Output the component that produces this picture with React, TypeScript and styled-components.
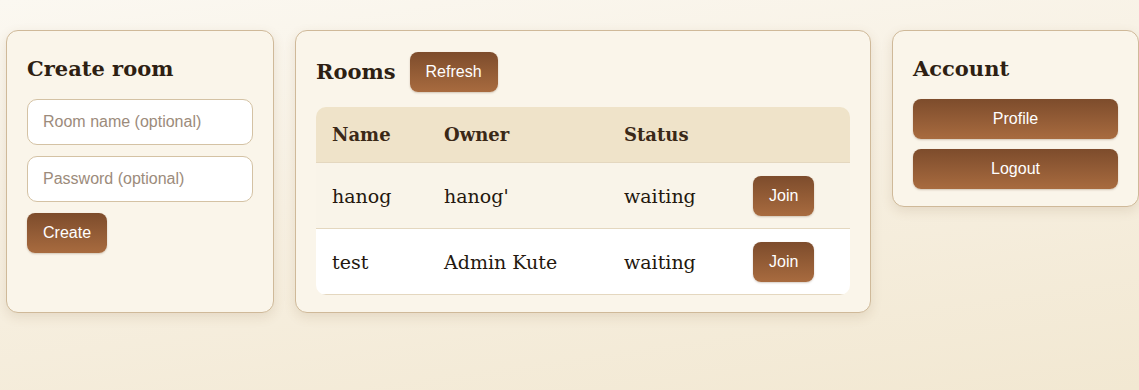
import React from 'react'
import styled, { createGlobalStyle } from 'styled-components'

type Room = {
  id: number
  name: string
  owner: string
  status: string
}

const rooms: Room[] = [
  { id: 1, name: 'hanog', owner: "hanog'", status: 'waiting' },
  { id: 2, name: 'test', owner: 'Admin Kute', status: 'waiting' },
]

const GlobalStyle = createGlobalStyle`
  html, body {
    margin: 0;
    padding: 0;
    min-height: 100vh;
    overflow: hidden;
  }
  body {
    background: linear-gradient(172deg, #fbf8f1 0%, #f7f0e2 45%, #f2e8d2 100%);
    font-family: 'DejaVu Serif', serif;
    color: #2b1d12;
  }
`

const Page = styled.div`
  display: grid;
  grid-template-columns: 268px 576px 247px;
  column-gap: 21px;
  align-items: stretch;
  align-content: start;
  padding: 30px 0 0 6px;
  min-height: 390px;
  box-sizing: border-box;
`

const Card = styled.section<{ $shrink?: boolean }>`
  align-self: ${p => (p.$shrink ? 'start' : 'stretch')};
  background: #faf5ea;
  border: 1px solid #cfb999;
  border-radius: 12px;
  box-shadow: 0 4px 12px rgba(125, 92, 50, 0.14);
  padding: 20px 20px 17px;
  box-sizing: border-box;
`

const Title = styled.h2`
  margin: 0 0 12px;
  font-size: 21px;
  line-height: 36px;
  font-weight: 700;
  color: #2e1f13;
`

const Stack = styled.div`
  display: flex;
  flex-direction: column;
  align-items: flex-start;
  gap: 11px;
`

const Field = styled.input`
  width: 226px;
  height: 46px;
  box-sizing: border-box;
  padding: 0 15px;
  border: 1px solid #d4c2a4;
  border-radius: 10px;
  background: #fff;
  font-family: 'Liberation Sans', Arial, sans-serif;
  font-size: 16px;
  color: #2b1d12;
  outline: none;
  &::placeholder {
    color: #9c8b7b;
  }
`

const Button = styled.button<{ $wide?: boolean }>`
  height: 40px;
  width: ${p => (p.$wide ? '100%' : 'auto')};
  padding: 0 16px;
  border: none;
  border-radius: 8px;
  background: linear-gradient(180deg, #7d4c2c 0%, #a86b3f 100%);
  box-shadow: 0 1px 2px rgba(90, 55, 25, 0.25);
  color: #fff;
  font-family: 'Liberation Sans', Arial, sans-serif;
  font-size: 16px;
  cursor: pointer;
`

const HeaderRow = styled.div`
  display: flex;
  align-items: center;
  gap: 14px;
  margin-top: 1px;
  margin-bottom: 15px;
  ${Title} {
    margin: 0;
  }
`

const Table = styled.table`
  width: 100%;
  border-collapse: separate;
  border-spacing: 0;
  border-radius: 10px;
  overflow: hidden;
  table-layout: fixed;
`

const Th = styled.th`
  background: #efe3c9;
  height: 55px;
  padding: 0 16px;
  text-align: left;
  font-size: 18px;
  font-weight: 700;
  color: #3a2817;
  border-bottom: 1px solid #e4d7bf;
`

const Row = styled.tr<{ $alt?: boolean }>`
  background: ${p => (p.$alt ? '#ffffff' : '#f9f4e9')};
`

const Td = styled.td`
  height: 65px;
  padding: 0 16px;
  font-size: 19px;
  color: #24180e;
  border-bottom: 1px solid #e4d7bf;
`

const Actions = styled.div`
  display: flex;
  flex-direction: column;
  gap: 10px;
`

export default function App() {
  return (
    <>
      <GlobalStyle />
      <Page>
        <Card>
          <Title>Create room</Title>
          <Stack>
            <Field type="text" placeholder="Room name (optional)" />
            <Field type="password" placeholder="Password (optional)" />
            <Button type="button">Create</Button>
          </Stack>
        </Card>

        <Card>
          <HeaderRow>
            <Title>Rooms</Title>
            <Button type="button">Refresh</Button>
          </HeaderRow>
          <Table>
            <colgroup>
              <col style={{ width: 112 }} />
              <col style={{ width: 180 }} />
              <col style={{ width: 129 }} />
              <col />
            </colgroup>
            <thead>
              <tr>
                <Th>Name</Th>
                <Th>Owner</Th>
                <Th>Status</Th>
                <Th />
              </tr>
            </thead>
            <tbody>
              {rooms.map((room, i) => (
                <Row key={room.id} $alt={i % 2 === 1}>
                  <Td>{room.name}</Td>
                  <Td>{room.owner}</Td>
                  <Td>{room.status}</Td>
                  <Td>
                    <Button type="button">Join</Button>
                  </Td>
                </Row>
              ))}
            </tbody>
          </Table>
        </Card>

        <Card $shrink>
          <Title>Account</Title>
          <Actions>
            <Button type="button" $wide>
              Profile
            </Button>
            <Button type="button" $wide>
              Logout
            </Button>
          </Actions>
        </Card>
      </Page>
    </>
  )
}
